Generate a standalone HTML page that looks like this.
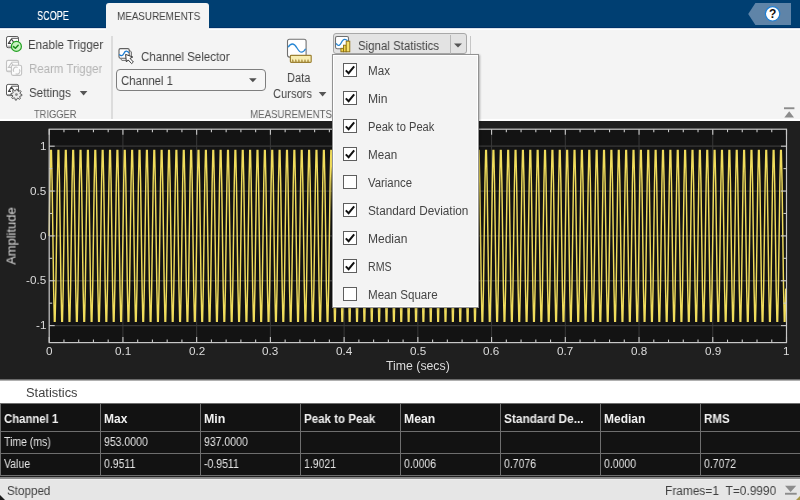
<!DOCTYPE html>
<html><head><meta charset="utf-8"><style>
html,body{margin:0;padding:0;width:800px;height:500px;overflow:hidden;background:#f4f4f4;}
.r{position:absolute;}
.t{position:absolute;white-space:pre;font-family:"Liberation Sans",sans-serif;will-change:transform;}
.lcd{will-change:auto;}
</style></head><body>
<div class="r" style="left:0px;top:0px;width:800px;height:27px;background:#003f72"></div>
<div class="r" style="left:0px;top:27px;width:800px;height:1px;background:#00336a"></div>
<div class="r" style="left:0px;top:28px;width:800px;height:1px;background:#dde3ea"></div>
<div class="r" style="left:0px;top:29px;width:800px;height:1px;background:#ffffff"></div>
<div class="r" style="left:0px;top:30px;width:800px;height:90px;background:#f4f4f4"></div>
<div class="r" style="left:106px;top:3px;width:103px;height:27px;background:#f4f4f4;border-radius:3px 3px 0 0"></div>
<div class="t" style="left:37.00px;top:10px;font-size:12px;line-height:12px;color:#ffffff;transform:scaleX(0.7557);transform-origin:0 0;text-shadow:0.35px 0 0 rgba(255,255,255,0.6);">SCOPE</div>
<div class="t" style="left:117.30px;top:10px;font-size:11.6px;line-height:11.6px;color:#404040;transform:scaleX(0.8503);transform-origin:0 0;">MEASUREMENTS</div>
<svg class="r" style="left:740px;top:0px" width="60" height="28" viewBox="740 0 60 28"><polygon points="748.2,14 755.4,3 791,3 791,25 755.4,25" fill="#5f84a8"/><circle cx="772.6" cy="13.8" r="7.2" fill="#ffffff" stroke="#1f7fd4" stroke-width="1.2"/><text x="772.6" y="18.2" text-anchor="middle" font-family="Liberation Sans" font-weight="bold" font-size="12" fill="#111">?</text></svg>
<div class="r" style="left:111px;top:36px;width:2px;height:83px;background:#dcdcdc"></div>
<div class="r" style="left:470px;top:36px;width:1px;height:19px;background:#c6c6c6"></div>
<div class="t" style="left:28.00px;top:39px;font-size:12.5px;line-height:12.5px;color:#444444;transform:scaleX(0.9225);transform-origin:0 0;">Enable Trigger</div>
<div class="t" style="left:28.50px;top:63px;font-size:12.5px;line-height:12.5px;color:#b4b4b4;transform:scaleX(0.9175);transform-origin:0 0;">Rearm Trigger</div>
<div class="t" style="left:29.40px;top:87px;font-size:12.5px;line-height:12.5px;color:#444444;transform:scaleX(0.9255);transform-origin:0 0;">Settings</div>
<svg class="r" style="left:78px;top:89px" width="12" height="8"><polygon points="1.8,2 9.4,2 5.6,6.5" fill="#555"/></svg>
<div class="t" style="left:34.20px;top:108px;font-size:11.6px;line-height:11.6px;color:#666666;transform:scaleX(0.8023);transform-origin:0 0;">TRIGGER</div>
<div class="t" style="left:141.00px;top:51px;font-size:12.5px;line-height:12.5px;color:#444444;transform:scaleX(0.9230);transform-origin:0 0;">Channel Selector</div>
<div class="r" style="left:115.5px;top:69.3px;width:150px;height:21.7px;box-sizing:border-box;border:1px solid #7e7e7e;border-radius:4px;background:#f6f6f6"></div>
<div class="t" style="left:120.65px;top:75px;font-size:12.5px;line-height:12.5px;color:#444444;transform:scaleX(0.9125);transform-origin:0 0;">Channel 1</div>
<svg class="r" style="left:246px;top:75px" width="14" height="10"><polygon points="3,3.2 10.7,3.2 6.85,7.3" fill="#505050"/></svg>
<div class="t" style="left:287.00px;top:72px;font-size:12.5px;line-height:12.5px;color:#444444;transform:scaleX(0.8859);transform-origin:0 0;">Data</div>
<div class="t" style="left:273.00px;top:88px;font-size:12.5px;line-height:12.5px;color:#444444;transform:scaleX(0.8912);transform-origin:0 0;">Cursors</div>
<svg class="r" style="left:316px;top:90px" width="12" height="8"><polygon points="2.8,2 10.4,2 6.6,6.5" fill="#555"/></svg>
<div class="t" style="left:250.00px;top:108px;font-size:11.6px;line-height:11.6px;color:#666666;transform:scaleX(0.8371);transform-origin:0 0;">MEASUREMENTS</div>
<div class="r" style="left:333px;top:33px;width:134px;height:21px;box-sizing:border-box;border:1px solid #a8a8a8;border-radius:3px;background:#e3e3e3"></div>
<div class="r" style="left:450px;top:35px;width:1px;height:19px;background:#b8b8b8"></div>
<div class="t" style="left:358.00px;top:40px;font-size:12.5px;line-height:12.5px;color:#444444;transform:scaleX(0.9180);transform-origin:0 0;">Signal Statistics</div>
<svg class="r" style="left:450px;top:40px" width="16" height="10"><polygon points="4,3.6 12,3.6 8,7.6" fill="#555"/></svg>
<svg class="r" style="left:0px;top:0px" width="800" height="120" viewBox="0 0 800 120"><rect x="6.5" y="36.5" width="12" height="11.2" rx="1.6" fill="#fff" stroke="#5c5c5c" stroke-width="1"/><line x1="11.5" y1="38.3" x2="18.3" y2="38.3" stroke="#555" stroke-width="1"/><polyline points="11,43.4 8.4,43.4 11.4,39 14.2,43" fill="none" stroke="#404040" stroke-width="1.2" stroke-linejoin="round"/><line x1="7" y1="46.2" x2="18" y2="46.2" stroke="#9a9a9a" stroke-width="1"/><circle cx="16.4" cy="46.4" r="5" fill="#c9f3c1" stroke="#22a022" stroke-width="1.2"/><polyline points="13.5,46.6 15.4,48.3 18.2,45.3" fill="none" stroke="#1b8a1b" stroke-width="1.5" stroke-linecap="round" stroke-linejoin="round"/><g stroke="#c2c2c2" fill="none"><rect x="6.5" y="60.4" width="12" height="11.4" rx="1.6" fill="#fbfbfb" stroke-width="1.1"/><line x1="11.5" y1="62.2" x2="18.3" y2="62.2" stroke-width="1"/><polyline points="11,67.4 8.4,67.4 11.4,63 13.6,66" stroke-width="1.1"/><line x1="7" y1="71" x2="11" y2="71" stroke-width="1"/><rect x="11.4" y="65.2" width="10.2" height="10.2" rx="1.6" fill="#fbfbfb" stroke-width="1.1"/><path d="M13.8 71.8 A3 3 0 0 1 17.6 67.4 M19.4 69.4 A3 3 0 0 1 15.6 73.8" stroke-width="1.1"/></g><rect x="6.5" y="84.4" width="12" height="11.2" rx="1.6" fill="#fff" stroke="#5c5c5c" stroke-width="1"/><line x1="11.4" y1="86.2" x2="18.3" y2="86.2" stroke="#555" stroke-width="1"/><polyline points="11,91.4 8.6,91.4 11.4,87 14,90.6" fill="none" stroke="#404040" stroke-width="1.2" stroke-linejoin="round"/><line x1="7" y1="94.6" x2="12" y2="94.6" stroke="#9a9a9a" stroke-width="1"/><polygon points="16.40,89.00 17.49,89.11 17.89,91.00 18.57,91.36 20.36,90.64 21.06,91.49 20.00,93.11 20.23,93.84 22.00,94.60 21.89,95.69 20.00,96.09 19.64,96.77 20.36,98.56 19.51,99.26 17.89,98.20 17.16,98.43 16.40,100.20 15.31,100.09 14.91,98.20 14.23,97.84 12.44,98.56 11.74,97.71 12.80,96.09 12.57,95.36 10.80,94.60 10.91,93.51 12.80,93.11 13.16,92.43 12.44,90.64 13.29,89.94 14.91,91.00 15.64,90.77" fill="#ececec" stroke="#4a4a4a" stroke-width="0.9" stroke-linejoin="round"/><circle cx="16.4" cy="94.6" r="1.4" fill="#8a8a8a"/><path d="M129 50 L131.4 51.8 L131.4 57.6 L129 59" fill="#e4e4e4" stroke="#707070" stroke-width="1"/><rect x="119" y="48.6" width="10.2" height="9.6" rx="1.4" fill="#fff" stroke="#606060" stroke-width="1.1"/><path d="M120.6 58.4 L121.8 60.4 L131 60.4" fill="none" stroke="#707070" stroke-width="1"/><path d="M119.3 54.3 C120.6 56.2 122.6 56.2 124 53.2 C125.2 50.6 127.4 50.6 128.8 53" fill="none" stroke="#1b7bd0" stroke-width="1.3"/><polygon points="125.6,54.4 126.4,62 128.2,59.9 131.6,63.6 133.4,62 130,58.4 132.8,57" fill="#fff" stroke="#3c3c3c" stroke-width="1" stroke-linejoin="round"/><rect x="287.5" y="39.2" width="18.6" height="17.9" rx="2" fill="#fff" stroke="#707070" stroke-width="1.1"/><path d="M288.2 47.2 C289.6 44.6 291 44 292.4 44 C294.6 44 296 46.4 297 48 C298.2 50 299.6 52.2 301.5 52.2 C303.2 52.2 304.6 50.6 305.6 48.8" fill="none" stroke="#2686d4" stroke-width="1.3"/><rect x="290.4" y="55.3" width="20.8" height="7" rx="0.8" fill="#f8eeb2" stroke="#9d8235" stroke-width="1.2"/><polygon points="291.70,61.8 293.90,61.8 292.80,58.8" fill="#a88a3a"/><polygon points="294.75,61.8 296.95,61.8 295.85,58.8" fill="#a88a3a"/><polygon points="297.80,61.8 300.00,61.8 298.90,58.8" fill="#a88a3a"/><polygon points="300.85,61.8 303.05,61.8 301.95,58.8" fill="#a88a3a"/><polygon points="303.90,61.8 306.10,61.8 305.00,58.8" fill="#a88a3a"/><polygon points="306.95,61.8 309.15,61.8 308.05,58.8" fill="#a88a3a"/><rect x="335.5" y="36.5" width="13" height="12.2" rx="1.6" fill="#fff" stroke="#707070" stroke-width="1.1"/><path d="M336.2 43.4 C337.2 45.4 338.6 45.8 339.6 45 C341 44 341.6 41.6 342.8 40.4 C344 39 345.6 39 347.6 40.8" fill="none" stroke="#2686d4" stroke-width="1.3"/><rect x="340.9" y="48.3" width="2.6" height="3.5" fill="#f1d54a" stroke="#8c6e12" stroke-width="0.9"/><rect x="343.5" y="45.2" width="2.7" height="6.6" fill="#f1d54a" stroke="#8c6e12" stroke-width="0.9"/><rect x="346.2" y="41.2" width="3.6" height="10.6" fill="#f6e06a" stroke="#8c6e12" stroke-width="0.9"/></svg>
<svg class="r" style="left:780px;top:104px" width="20" height="16"><rect x="4" y="3.3" width="10.4" height="1.9" fill="#8c8c8c"/><polygon points="4.3,13.5 14,13.5 9.2,7.3" fill="#8c8c8c"/></svg>
<div class="r" style="left:0px;top:119px;width:800px;height:2px;background:#ffffff"></div>
<div class="r" style="left:0px;top:121px;width:800px;height:258px;background:#1f1f1f"></div>
<svg class="r" style="left:0px;top:0px" width="800" height="500" viewBox="0 0 800 500"><rect x="49.2" y="129.2" width="737.30" height="213.40" fill="#131313"/><line x1="122.93" y1="129.2" x2="122.93" y2="342.6" stroke="#3a3a3a" stroke-width="1"/><line x1="196.66" y1="129.2" x2="196.66" y2="342.6" stroke="#3a3a3a" stroke-width="1"/><line x1="270.39" y1="129.2" x2="270.39" y2="342.6" stroke="#3a3a3a" stroke-width="1"/><line x1="344.12" y1="129.2" x2="344.12" y2="342.6" stroke="#3a3a3a" stroke-width="1"/><line x1="417.85" y1="129.2" x2="417.85" y2="342.6" stroke="#3a3a3a" stroke-width="1"/><line x1="491.58" y1="129.2" x2="491.58" y2="342.6" stroke="#3a3a3a" stroke-width="1"/><line x1="565.31" y1="129.2" x2="565.31" y2="342.6" stroke="#3a3a3a" stroke-width="1"/><line x1="639.04" y1="129.2" x2="639.04" y2="342.6" stroke="#3a3a3a" stroke-width="1"/><line x1="712.77" y1="129.2" x2="712.77" y2="342.6" stroke="#3a3a3a" stroke-width="1"/><line x1="49.2" y1="325.60" x2="786.5" y2="325.60" stroke="#3a3a3a" stroke-width="1.3"/><line x1="49.2" y1="280.75" x2="786.5" y2="280.75" stroke="#3a3a3a" stroke-width="1.3"/><line x1="49.2" y1="235.90" x2="786.5" y2="235.90" stroke="#3a3a3a" stroke-width="1.3"/><line x1="49.2" y1="191.05" x2="786.5" y2="191.05" stroke="#3a3a3a" stroke-width="1.3"/><line x1="49.2" y1="146.20" x2="786.5" y2="146.20" stroke="#3a3a3a" stroke-width="1.3"/><polyline points="49.20,235.90 49.94,183.18 50.67,150.59 51.41,150.59 52.15,183.18 52.89,235.90 53.62,288.62 54.36,321.21 55.10,321.21 55.84,288.62 56.57,235.90 57.31,183.18 58.05,150.59 58.78,150.59 59.52,183.18 60.26,235.90 61.00,288.62 61.73,321.21 62.47,321.21 63.21,288.62 63.95,235.90 64.68,183.18 65.42,150.59 66.16,150.59 66.90,183.18 67.63,235.90 68.37,288.62 69.11,321.21 69.84,321.21 70.58,288.62 71.32,235.90 72.06,183.18 72.79,150.59 73.53,150.59 74.27,183.18 75.01,235.90 75.74,288.62 76.48,321.21 77.22,321.21 77.95,288.62 78.69,235.90 79.43,183.18 80.17,150.59 80.90,150.59 81.64,183.18 82.38,235.90 83.12,288.62 83.85,321.21 84.59,321.21 85.33,288.62 86.06,235.90 86.80,183.18 87.54,150.59 88.28,150.59 89.01,183.18 89.75,235.90 90.49,288.62 91.23,321.21 91.96,321.21 92.70,288.62 93.44,235.90 94.18,183.18 94.91,150.59 95.65,150.59 96.39,183.18 97.12,235.90 97.86,288.62 98.60,321.21 99.34,321.21 100.07,288.62 100.81,235.90 101.55,183.18 102.29,150.59 103.02,150.59 103.76,183.18 104.50,235.90 105.23,288.62 105.97,321.21 106.71,321.21 107.45,288.62 108.18,235.90 108.92,183.18 109.66,150.59 110.40,150.59 111.13,183.18 111.87,235.90 112.61,288.62 113.35,321.21 114.08,321.21 114.82,288.62 115.56,235.90 116.29,183.18 117.03,150.59 117.77,150.59 118.51,183.18 119.24,235.90 119.98,288.62 120.72,321.21 121.46,321.21 122.19,288.62 122.93,235.90 123.67,183.18 124.40,150.59 125.14,150.59 125.88,183.18 126.62,235.90 127.35,288.62 128.09,321.21 128.83,321.21 129.57,288.62 130.30,235.90 131.04,183.18 131.78,150.59 132.51,150.59 133.25,183.18 133.99,235.90 134.73,288.62 135.46,321.21 136.20,321.21 136.94,288.62 137.68,235.90 138.41,183.18 139.15,150.59 139.89,150.59 140.63,183.18 141.36,235.90 142.10,288.62 142.84,321.21 143.57,321.21 144.31,288.62 145.05,235.90 145.79,183.18 146.52,150.59 147.26,150.59 148.00,183.18 148.74,235.90 149.47,288.62 150.21,321.21 150.95,321.21 151.68,288.62 152.42,235.90 153.16,183.18 153.90,150.59 154.63,150.59 155.37,183.18 156.11,235.90 156.85,288.62 157.58,321.21 158.32,321.21 159.06,288.62 159.79,235.90 160.53,183.18 161.27,150.59 162.01,150.59 162.74,183.18 163.48,235.90 164.22,288.62 164.96,321.21 165.69,321.21 166.43,288.62 167.17,235.90 167.91,183.18 168.64,150.59 169.38,150.59 170.12,183.18 170.85,235.90 171.59,288.62 172.33,321.21 173.07,321.21 173.80,288.62 174.54,235.90 175.28,183.18 176.02,150.59 176.75,150.59 177.49,183.18 178.23,235.90 178.96,288.62 179.70,321.21 180.44,321.21 181.18,288.62 181.91,235.90 182.65,183.18 183.39,150.59 184.13,150.59 184.86,183.18 185.60,235.90 186.34,288.62 187.08,321.21 187.81,321.21 188.55,288.62 189.29,235.90 190.02,183.18 190.76,150.59 191.50,150.59 192.24,183.18 192.97,235.90 193.71,288.62 194.45,321.21 195.19,321.21 195.92,288.62 196.66,235.90 197.40,183.18 198.13,150.59 198.87,150.59 199.61,183.18 200.35,235.90 201.08,288.62 201.82,321.21 202.56,321.21 203.30,288.62 204.03,235.90 204.77,183.18 205.51,150.59 206.24,150.59 206.98,183.18 207.72,235.90 208.46,288.62 209.19,321.21 209.93,321.21 210.67,288.62 211.41,235.90 212.14,183.18 212.88,150.59 213.62,150.59 214.36,183.18 215.09,235.90 215.83,288.62 216.57,321.21 217.30,321.21 218.04,288.62 218.78,235.90 219.52,183.18 220.25,150.59 220.99,150.59 221.73,183.18 222.47,235.90 223.20,288.62 223.94,321.21 224.68,321.21 225.41,288.62 226.15,235.90 226.89,183.18 227.63,150.59 228.36,150.59 229.10,183.18 229.84,235.90 230.58,288.62 231.31,321.21 232.05,321.21 232.79,288.62 233.52,235.90 234.26,183.18 235.00,150.59 235.74,150.59 236.47,183.18 237.21,235.90 237.95,288.62 238.69,321.21 239.42,321.21 240.16,288.62 240.90,235.90 241.64,183.18 242.37,150.59 243.11,150.59 243.85,183.18 244.58,235.90 245.32,288.62 246.06,321.21 246.80,321.21 247.53,288.62 248.27,235.90 249.01,183.18 249.75,150.59 250.48,150.59 251.22,183.18 251.96,235.90 252.69,288.62 253.43,321.21 254.17,321.21 254.91,288.62 255.64,235.90 256.38,183.18 257.12,150.59 257.86,150.59 258.59,183.18 259.33,235.90 260.07,288.62 260.81,321.21 261.54,321.21 262.28,288.62 263.02,235.90 263.75,183.18 264.49,150.59 265.23,150.59 265.97,183.18 266.70,235.90 267.44,288.62 268.18,321.21 268.92,321.21 269.65,288.62 270.39,235.90 271.13,183.18 271.86,150.59 272.60,150.59 273.34,183.18 274.08,235.90 274.81,288.62 275.55,321.21 276.29,321.21 277.03,288.62 277.76,235.90 278.50,183.18 279.24,150.59 279.97,150.59 280.71,183.18 281.45,235.90 282.19,288.62 282.92,321.21 283.66,321.21 284.40,288.62 285.14,235.90 285.87,183.18 286.61,150.59 287.35,150.59 288.09,183.18 288.82,235.90 289.56,288.62 290.30,321.21 291.03,321.21 291.77,288.62 292.51,235.90 293.25,183.18 293.98,150.59 294.72,150.59 295.46,183.18 296.20,235.90 296.93,288.62 297.67,321.21 298.41,321.21 299.14,288.62 299.88,235.90 300.62,183.18 301.36,150.59 302.09,150.59 302.83,183.18 303.57,235.90 304.31,288.62 305.04,321.21 305.78,321.21 306.52,288.62 307.25,235.90 307.99,183.18 308.73,150.59 309.47,150.59 310.20,183.18 310.94,235.90 311.68,288.62 312.42,321.21 313.15,321.21 313.89,288.62 314.63,235.90 315.37,183.18 316.10,150.59 316.84,150.59 317.58,183.18 318.31,235.90 319.05,288.62 319.79,321.21 320.53,321.21 321.26,288.62 322.00,235.90 322.74,183.18 323.48,150.59 324.21,150.59 324.95,183.18 325.69,235.90 326.42,288.62 327.16,321.21 327.90,321.21 328.64,288.62 329.37,235.90 330.11,183.18 330.85,150.59 331.59,150.59 332.32,183.18 333.06,235.90 333.80,288.62 334.54,321.21 335.27,321.21 336.01,288.62 336.75,235.90 337.48,183.18 338.22,150.59 338.96,150.59 339.70,183.18 340.43,235.90 341.17,288.62 341.91,321.21 342.65,321.21 343.38,288.62 344.12,235.90 344.86,183.18 345.59,150.59 346.33,150.59 347.07,183.18 347.81,235.90 348.54,288.62 349.28,321.21 350.02,321.21 350.76,288.62 351.49,235.90 352.23,183.18 352.97,150.59 353.70,150.59 354.44,183.18 355.18,235.90 355.92,288.62 356.65,321.21 357.39,321.21 358.13,288.62 358.87,235.90 359.60,183.18 360.34,150.59 361.08,150.59 361.82,183.18 362.55,235.90 363.29,288.62 364.03,321.21 364.76,321.21 365.50,288.62 366.24,235.90 366.98,183.18 367.71,150.59 368.45,150.59 369.19,183.18 369.93,235.90 370.66,288.62 371.40,321.21 372.14,321.21 372.87,288.62 373.61,235.90 374.35,183.18 375.09,150.59 375.82,150.59 376.56,183.18 377.30,235.90 378.04,288.62 378.77,321.21 379.51,321.21 380.25,288.62 380.98,235.90 381.72,183.18 382.46,150.59 383.20,150.59 383.93,183.18 384.67,235.90 385.41,288.62 386.15,321.21 386.88,321.21 387.62,288.62 388.36,235.90 389.10,183.18 389.83,150.59 390.57,150.59 391.31,183.18 392.04,235.90 392.78,288.62 393.52,321.21 394.26,321.21 394.99,288.62 395.73,235.90 396.47,183.18 397.21,150.59 397.94,150.59 398.68,183.18 399.42,235.90 400.15,288.62 400.89,321.21 401.63,321.21 402.37,288.62 403.10,235.90 403.84,183.18 404.58,150.59 405.32,150.59 406.05,183.18 406.79,235.90 407.53,288.62 408.27,321.21 409.00,321.21 409.74,288.62 410.48,235.90 411.21,183.18 411.95,150.59 412.69,150.59 413.43,183.18 414.16,235.90 414.90,288.62 415.64,321.21 416.38,321.21 417.11,288.62 417.85,235.90 418.59,183.18 419.32,150.59 420.06,150.59 420.80,183.18 421.54,235.90 422.27,288.62 423.01,321.21 423.75,321.21 424.49,288.62 425.22,235.90 425.96,183.18 426.70,150.59 427.43,150.59 428.17,183.18 428.91,235.90 429.65,288.62 430.38,321.21 431.12,321.21 431.86,288.62 432.60,235.90 433.33,183.18 434.07,150.59 434.81,150.59 435.55,183.18 436.28,235.90 437.02,288.62 437.76,321.21 438.49,321.21 439.23,288.62 439.97,235.90 440.71,183.18 441.44,150.59 442.18,150.59 442.92,183.18 443.66,235.90 444.39,288.62 445.13,321.21 445.87,321.21 446.60,288.62 447.34,235.90 448.08,183.18 448.82,150.59 449.55,150.59 450.29,183.18 451.03,235.90 451.77,288.62 452.50,321.21 453.24,321.21 453.98,288.62 454.71,235.90 455.45,183.18 456.19,150.59 456.93,150.59 457.66,183.18 458.40,235.90 459.14,288.62 459.88,321.21 460.61,321.21 461.35,288.62 462.09,235.90 462.83,183.18 463.56,150.59 464.30,150.59 465.04,183.18 465.77,235.90 466.51,288.62 467.25,321.21 467.99,321.21 468.72,288.62 469.46,235.90 470.20,183.18 470.94,150.59 471.67,150.59 472.41,183.18 473.15,235.90 473.88,288.62 474.62,321.21 475.36,321.21 476.10,288.62 476.83,235.90 477.57,183.18 478.31,150.59 479.05,150.59 479.78,183.18 480.52,235.90 481.26,288.62 482.00,321.21 482.73,321.21 483.47,288.62 484.21,235.90 484.94,183.18 485.68,150.59 486.42,150.59 487.16,183.18 487.89,235.90 488.63,288.62 489.37,321.21 490.11,321.21 490.84,288.62 491.58,235.90 492.32,183.18 493.05,150.59 493.79,150.59 494.53,183.18 495.27,235.90 496.00,288.62 496.74,321.21 497.48,321.21 498.22,288.62 498.95,235.90 499.69,183.18 500.43,150.59 501.16,150.59 501.90,183.18 502.64,235.90 503.38,288.62 504.11,321.21 504.85,321.21 505.59,288.62 506.33,235.90 507.06,183.18 507.80,150.59 508.54,150.59 509.28,183.18 510.01,235.90 510.75,288.62 511.49,321.21 512.22,321.21 512.96,288.62 513.70,235.90 514.44,183.18 515.17,150.59 515.91,150.59 516.65,183.18 517.39,235.90 518.12,288.62 518.86,321.21 519.60,321.21 520.33,288.62 521.07,235.90 521.81,183.18 522.55,150.59 523.28,150.59 524.02,183.18 524.76,235.90 525.50,288.62 526.23,321.21 526.97,321.21 527.71,288.62 528.45,235.90 529.18,183.18 529.92,150.59 530.66,150.59 531.39,183.18 532.13,235.90 532.87,288.62 533.61,321.21 534.34,321.21 535.08,288.62 535.82,235.90 536.56,183.18 537.29,150.59 538.03,150.59 538.77,183.18 539.50,235.90 540.24,288.62 540.98,321.21 541.72,321.21 542.45,288.62 543.19,235.90 543.93,183.18 544.67,150.59 545.40,150.59 546.14,183.18 546.88,235.90 547.61,288.62 548.35,321.21 549.09,321.21 549.83,288.62 550.56,235.90 551.30,183.18 552.04,150.59 552.78,150.59 553.51,183.18 554.25,235.90 554.99,288.62 555.73,321.21 556.46,321.21 557.20,288.62 557.94,235.90 558.67,183.18 559.41,150.59 560.15,150.59 560.89,183.18 561.62,235.90 562.36,288.62 563.10,321.21 563.84,321.21 564.57,288.62 565.31,235.90 566.05,183.18 566.78,150.59 567.52,150.59 568.26,183.18 569.00,235.90 569.73,288.62 570.47,321.21 571.21,321.21 571.95,288.62 572.68,235.90 573.42,183.18 574.16,150.59 574.89,150.59 575.63,183.18 576.37,235.90 577.11,288.62 577.84,321.21 578.58,321.21 579.32,288.62 580.06,235.90 580.79,183.18 581.53,150.59 582.27,150.59 583.01,183.18 583.74,235.90 584.48,288.62 585.22,321.21 585.95,321.21 586.69,288.62 587.43,235.90 588.17,183.18 588.90,150.59 589.64,150.59 590.38,183.18 591.12,235.90 591.85,288.62 592.59,321.21 593.33,321.21 594.06,288.62 594.80,235.90 595.54,183.18 596.28,150.59 597.01,150.59 597.75,183.18 598.49,235.90 599.23,288.62 599.96,321.21 600.70,321.21 601.44,288.62 602.17,235.90 602.91,183.18 603.65,150.59 604.39,150.59 605.12,183.18 605.86,235.90 606.60,288.62 607.34,321.21 608.07,321.21 608.81,288.62 609.55,235.90 610.29,183.18 611.02,150.59 611.76,150.59 612.50,183.18 613.23,235.90 613.97,288.62 614.71,321.21 615.45,321.21 616.18,288.62 616.92,235.90 617.66,183.18 618.40,150.59 619.13,150.59 619.87,183.18 620.61,235.90 621.34,288.62 622.08,321.21 622.82,321.21 623.56,288.62 624.29,235.90 625.03,183.18 625.77,150.59 626.51,150.59 627.24,183.18 627.98,235.90 628.72,288.62 629.46,321.21 630.19,321.21 630.93,288.62 631.67,235.90 632.40,183.18 633.14,150.59 633.88,150.59 634.62,183.18 635.35,235.90 636.09,288.62 636.83,321.21 637.57,321.21 638.30,288.62 639.04,235.90 639.78,183.18 640.51,150.59 641.25,150.59 641.99,183.18 642.73,235.90 643.46,288.62 644.20,321.21 644.94,321.21 645.68,288.62 646.41,235.90 647.15,183.18 647.89,150.59 648.62,150.59 649.36,183.18 650.10,235.90 650.84,288.62 651.57,321.21 652.31,321.21 653.05,288.62 653.79,235.90 654.52,183.18 655.26,150.59 656.00,150.59 656.74,183.18 657.47,235.90 658.21,288.62 658.95,321.21 659.68,321.21 660.42,288.62 661.16,235.90 661.90,183.18 662.63,150.59 663.37,150.59 664.11,183.18 664.85,235.90 665.58,288.62 666.32,321.21 667.06,321.21 667.79,288.62 668.53,235.90 669.27,183.18 670.01,150.59 670.74,150.59 671.48,183.18 672.22,235.90 672.96,288.62 673.69,321.21 674.43,321.21 675.17,288.62 675.90,235.90 676.64,183.18 677.38,150.59 678.12,150.59 678.85,183.18 679.59,235.90 680.33,288.62 681.07,321.21 681.80,321.21 682.54,288.62 683.28,235.90 684.02,183.18 684.75,150.59 685.49,150.59 686.23,183.18 686.96,235.90 687.70,288.62 688.44,321.21 689.18,321.21 689.91,288.62 690.65,235.90 691.39,183.18 692.13,150.59 692.86,150.59 693.60,183.18 694.34,235.90 695.07,288.62 695.81,321.21 696.55,321.21 697.29,288.62 698.02,235.90 698.76,183.18 699.50,150.59 700.24,150.59 700.97,183.18 701.71,235.90 702.45,288.62 703.19,321.21 703.92,321.21 704.66,288.62 705.40,235.90 706.13,183.18 706.87,150.59 707.61,150.59 708.35,183.18 709.08,235.90 709.82,288.62 710.56,321.21 711.30,321.21 712.03,288.62 712.77,235.90 713.51,183.18 714.24,150.59 714.98,150.59 715.72,183.18 716.46,235.90 717.19,288.62 717.93,321.21 718.67,321.21 719.41,288.62 720.14,235.90 720.88,183.18 721.62,150.59 722.35,150.59 723.09,183.18 723.83,235.90 724.57,288.62 725.30,321.21 726.04,321.21 726.78,288.62 727.52,235.90 728.25,183.18 728.99,150.59 729.73,150.59 730.47,183.18 731.20,235.90 731.94,288.62 732.68,321.21 733.41,321.21 734.15,288.62 734.89,235.90 735.63,183.18 736.36,150.59 737.10,150.59 737.84,183.18 738.58,235.90 739.31,288.62 740.05,321.21 740.79,321.21 741.52,288.62 742.26,235.90 743.00,183.18 743.74,150.59 744.47,150.59 745.21,183.18 745.95,235.90 746.69,288.62 747.42,321.21 748.16,321.21 748.90,288.62 749.63,235.90 750.37,183.18 751.11,150.59 751.85,150.59 752.58,183.18 753.32,235.90 754.06,288.62 754.80,321.21 755.53,321.21 756.27,288.62 757.01,235.90 757.75,183.18 758.48,150.59 759.22,150.59 759.96,183.18 760.69,235.90 761.43,288.62 762.17,321.21 762.91,321.21 763.64,288.62 764.38,235.90 765.12,183.18 765.86,150.59 766.59,150.59 767.33,183.18 768.07,235.90 768.80,288.62 769.54,321.21 770.28,321.21 771.02,288.62 771.75,235.90 772.49,183.18 773.23,150.59 773.97,150.59 774.70,183.18 775.44,235.90 776.18,288.62 776.92,321.21 777.65,321.21 778.39,288.62 779.13,235.90 779.86,183.18 780.60,150.59 781.34,150.59 782.08,183.18 782.81,235.90 783.55,288.62 784.29,321.21 785.03,321.21 785.76,288.62" fill="none" stroke="#f0dc5c" stroke-width="1.45" stroke-linejoin="miter" stroke-miterlimit="2"/><rect x="49.2" y="129.2" width="737.30" height="213.40" fill="none" stroke="#c8c8c8" stroke-width="1.2"/><line x1="49.20" y1="342.6" x2="49.20" y2="337.1" stroke="#c8c8c8" stroke-width="1.1"/><line x1="49.20" y1="129.2" x2="49.20" y2="134.7" stroke="#c8c8c8" stroke-width="1.1"/><line x1="63.95" y1="342.6" x2="63.95" y2="339.6" stroke="#c8c8c8" stroke-width="1.1"/><line x1="63.95" y1="129.2" x2="63.95" y2="132.2" stroke="#c8c8c8" stroke-width="1.1"/><line x1="78.69" y1="342.6" x2="78.69" y2="339.6" stroke="#c8c8c8" stroke-width="1.1"/><line x1="78.69" y1="129.2" x2="78.69" y2="132.2" stroke="#c8c8c8" stroke-width="1.1"/><line x1="93.44" y1="342.6" x2="93.44" y2="339.6" stroke="#c8c8c8" stroke-width="1.1"/><line x1="93.44" y1="129.2" x2="93.44" y2="132.2" stroke="#c8c8c8" stroke-width="1.1"/><line x1="108.18" y1="342.6" x2="108.18" y2="339.6" stroke="#c8c8c8" stroke-width="1.1"/><line x1="108.18" y1="129.2" x2="108.18" y2="132.2" stroke="#c8c8c8" stroke-width="1.1"/><line x1="122.93" y1="342.6" x2="122.93" y2="337.1" stroke="#c8c8c8" stroke-width="1.1"/><line x1="122.93" y1="129.2" x2="122.93" y2="134.7" stroke="#c8c8c8" stroke-width="1.1"/><line x1="137.68" y1="342.6" x2="137.68" y2="339.6" stroke="#c8c8c8" stroke-width="1.1"/><line x1="137.68" y1="129.2" x2="137.68" y2="132.2" stroke="#c8c8c8" stroke-width="1.1"/><line x1="152.42" y1="342.6" x2="152.42" y2="339.6" stroke="#c8c8c8" stroke-width="1.1"/><line x1="152.42" y1="129.2" x2="152.42" y2="132.2" stroke="#c8c8c8" stroke-width="1.1"/><line x1="167.17" y1="342.6" x2="167.17" y2="339.6" stroke="#c8c8c8" stroke-width="1.1"/><line x1="167.17" y1="129.2" x2="167.17" y2="132.2" stroke="#c8c8c8" stroke-width="1.1"/><line x1="181.91" y1="342.6" x2="181.91" y2="339.6" stroke="#c8c8c8" stroke-width="1.1"/><line x1="181.91" y1="129.2" x2="181.91" y2="132.2" stroke="#c8c8c8" stroke-width="1.1"/><line x1="196.66" y1="342.6" x2="196.66" y2="337.1" stroke="#c8c8c8" stroke-width="1.1"/><line x1="196.66" y1="129.2" x2="196.66" y2="134.7" stroke="#c8c8c8" stroke-width="1.1"/><line x1="211.41" y1="342.6" x2="211.41" y2="339.6" stroke="#c8c8c8" stroke-width="1.1"/><line x1="211.41" y1="129.2" x2="211.41" y2="132.2" stroke="#c8c8c8" stroke-width="1.1"/><line x1="226.15" y1="342.6" x2="226.15" y2="339.6" stroke="#c8c8c8" stroke-width="1.1"/><line x1="226.15" y1="129.2" x2="226.15" y2="132.2" stroke="#c8c8c8" stroke-width="1.1"/><line x1="240.90" y1="342.6" x2="240.90" y2="339.6" stroke="#c8c8c8" stroke-width="1.1"/><line x1="240.90" y1="129.2" x2="240.90" y2="132.2" stroke="#c8c8c8" stroke-width="1.1"/><line x1="255.64" y1="342.6" x2="255.64" y2="339.6" stroke="#c8c8c8" stroke-width="1.1"/><line x1="255.64" y1="129.2" x2="255.64" y2="132.2" stroke="#c8c8c8" stroke-width="1.1"/><line x1="270.39" y1="342.6" x2="270.39" y2="337.1" stroke="#c8c8c8" stroke-width="1.1"/><line x1="270.39" y1="129.2" x2="270.39" y2="134.7" stroke="#c8c8c8" stroke-width="1.1"/><line x1="285.14" y1="342.6" x2="285.14" y2="339.6" stroke="#c8c8c8" stroke-width="1.1"/><line x1="285.14" y1="129.2" x2="285.14" y2="132.2" stroke="#c8c8c8" stroke-width="1.1"/><line x1="299.88" y1="342.6" x2="299.88" y2="339.6" stroke="#c8c8c8" stroke-width="1.1"/><line x1="299.88" y1="129.2" x2="299.88" y2="132.2" stroke="#c8c8c8" stroke-width="1.1"/><line x1="314.63" y1="342.6" x2="314.63" y2="339.6" stroke="#c8c8c8" stroke-width="1.1"/><line x1="314.63" y1="129.2" x2="314.63" y2="132.2" stroke="#c8c8c8" stroke-width="1.1"/><line x1="329.37" y1="342.6" x2="329.37" y2="339.6" stroke="#c8c8c8" stroke-width="1.1"/><line x1="329.37" y1="129.2" x2="329.37" y2="132.2" stroke="#c8c8c8" stroke-width="1.1"/><line x1="344.12" y1="342.6" x2="344.12" y2="337.1" stroke="#c8c8c8" stroke-width="1.1"/><line x1="344.12" y1="129.2" x2="344.12" y2="134.7" stroke="#c8c8c8" stroke-width="1.1"/><line x1="358.87" y1="342.6" x2="358.87" y2="339.6" stroke="#c8c8c8" stroke-width="1.1"/><line x1="358.87" y1="129.2" x2="358.87" y2="132.2" stroke="#c8c8c8" stroke-width="1.1"/><line x1="373.61" y1="342.6" x2="373.61" y2="339.6" stroke="#c8c8c8" stroke-width="1.1"/><line x1="373.61" y1="129.2" x2="373.61" y2="132.2" stroke="#c8c8c8" stroke-width="1.1"/><line x1="388.36" y1="342.6" x2="388.36" y2="339.6" stroke="#c8c8c8" stroke-width="1.1"/><line x1="388.36" y1="129.2" x2="388.36" y2="132.2" stroke="#c8c8c8" stroke-width="1.1"/><line x1="403.10" y1="342.6" x2="403.10" y2="339.6" stroke="#c8c8c8" stroke-width="1.1"/><line x1="403.10" y1="129.2" x2="403.10" y2="132.2" stroke="#c8c8c8" stroke-width="1.1"/><line x1="417.85" y1="342.6" x2="417.85" y2="337.1" stroke="#c8c8c8" stroke-width="1.1"/><line x1="417.85" y1="129.2" x2="417.85" y2="134.7" stroke="#c8c8c8" stroke-width="1.1"/><line x1="432.60" y1="342.6" x2="432.60" y2="339.6" stroke="#c8c8c8" stroke-width="1.1"/><line x1="432.60" y1="129.2" x2="432.60" y2="132.2" stroke="#c8c8c8" stroke-width="1.1"/><line x1="447.34" y1="342.6" x2="447.34" y2="339.6" stroke="#c8c8c8" stroke-width="1.1"/><line x1="447.34" y1="129.2" x2="447.34" y2="132.2" stroke="#c8c8c8" stroke-width="1.1"/><line x1="462.09" y1="342.6" x2="462.09" y2="339.6" stroke="#c8c8c8" stroke-width="1.1"/><line x1="462.09" y1="129.2" x2="462.09" y2="132.2" stroke="#c8c8c8" stroke-width="1.1"/><line x1="476.83" y1="342.6" x2="476.83" y2="339.6" stroke="#c8c8c8" stroke-width="1.1"/><line x1="476.83" y1="129.2" x2="476.83" y2="132.2" stroke="#c8c8c8" stroke-width="1.1"/><line x1="491.58" y1="342.6" x2="491.58" y2="337.1" stroke="#c8c8c8" stroke-width="1.1"/><line x1="491.58" y1="129.2" x2="491.58" y2="134.7" stroke="#c8c8c8" stroke-width="1.1"/><line x1="506.33" y1="342.6" x2="506.33" y2="339.6" stroke="#c8c8c8" stroke-width="1.1"/><line x1="506.33" y1="129.2" x2="506.33" y2="132.2" stroke="#c8c8c8" stroke-width="1.1"/><line x1="521.07" y1="342.6" x2="521.07" y2="339.6" stroke="#c8c8c8" stroke-width="1.1"/><line x1="521.07" y1="129.2" x2="521.07" y2="132.2" stroke="#c8c8c8" stroke-width="1.1"/><line x1="535.82" y1="342.6" x2="535.82" y2="339.6" stroke="#c8c8c8" stroke-width="1.1"/><line x1="535.82" y1="129.2" x2="535.82" y2="132.2" stroke="#c8c8c8" stroke-width="1.1"/><line x1="550.56" y1="342.6" x2="550.56" y2="339.6" stroke="#c8c8c8" stroke-width="1.1"/><line x1="550.56" y1="129.2" x2="550.56" y2="132.2" stroke="#c8c8c8" stroke-width="1.1"/><line x1="565.31" y1="342.6" x2="565.31" y2="337.1" stroke="#c8c8c8" stroke-width="1.1"/><line x1="565.31" y1="129.2" x2="565.31" y2="134.7" stroke="#c8c8c8" stroke-width="1.1"/><line x1="580.06" y1="342.6" x2="580.06" y2="339.6" stroke="#c8c8c8" stroke-width="1.1"/><line x1="580.06" y1="129.2" x2="580.06" y2="132.2" stroke="#c8c8c8" stroke-width="1.1"/><line x1="594.80" y1="342.6" x2="594.80" y2="339.6" stroke="#c8c8c8" stroke-width="1.1"/><line x1="594.80" y1="129.2" x2="594.80" y2="132.2" stroke="#c8c8c8" stroke-width="1.1"/><line x1="609.55" y1="342.6" x2="609.55" y2="339.6" stroke="#c8c8c8" stroke-width="1.1"/><line x1="609.55" y1="129.2" x2="609.55" y2="132.2" stroke="#c8c8c8" stroke-width="1.1"/><line x1="624.29" y1="342.6" x2="624.29" y2="339.6" stroke="#c8c8c8" stroke-width="1.1"/><line x1="624.29" y1="129.2" x2="624.29" y2="132.2" stroke="#c8c8c8" stroke-width="1.1"/><line x1="639.04" y1="342.6" x2="639.04" y2="337.1" stroke="#c8c8c8" stroke-width="1.1"/><line x1="639.04" y1="129.2" x2="639.04" y2="134.7" stroke="#c8c8c8" stroke-width="1.1"/><line x1="653.79" y1="342.6" x2="653.79" y2="339.6" stroke="#c8c8c8" stroke-width="1.1"/><line x1="653.79" y1="129.2" x2="653.79" y2="132.2" stroke="#c8c8c8" stroke-width="1.1"/><line x1="668.53" y1="342.6" x2="668.53" y2="339.6" stroke="#c8c8c8" stroke-width="1.1"/><line x1="668.53" y1="129.2" x2="668.53" y2="132.2" stroke="#c8c8c8" stroke-width="1.1"/><line x1="683.28" y1="342.6" x2="683.28" y2="339.6" stroke="#c8c8c8" stroke-width="1.1"/><line x1="683.28" y1="129.2" x2="683.28" y2="132.2" stroke="#c8c8c8" stroke-width="1.1"/><line x1="698.02" y1="342.6" x2="698.02" y2="339.6" stroke="#c8c8c8" stroke-width="1.1"/><line x1="698.02" y1="129.2" x2="698.02" y2="132.2" stroke="#c8c8c8" stroke-width="1.1"/><line x1="712.77" y1="342.6" x2="712.77" y2="337.1" stroke="#c8c8c8" stroke-width="1.1"/><line x1="712.77" y1="129.2" x2="712.77" y2="134.7" stroke="#c8c8c8" stroke-width="1.1"/><line x1="727.52" y1="342.6" x2="727.52" y2="339.6" stroke="#c8c8c8" stroke-width="1.1"/><line x1="727.52" y1="129.2" x2="727.52" y2="132.2" stroke="#c8c8c8" stroke-width="1.1"/><line x1="742.26" y1="342.6" x2="742.26" y2="339.6" stroke="#c8c8c8" stroke-width="1.1"/><line x1="742.26" y1="129.2" x2="742.26" y2="132.2" stroke="#c8c8c8" stroke-width="1.1"/><line x1="757.01" y1="342.6" x2="757.01" y2="339.6" stroke="#c8c8c8" stroke-width="1.1"/><line x1="757.01" y1="129.2" x2="757.01" y2="132.2" stroke="#c8c8c8" stroke-width="1.1"/><line x1="771.75" y1="342.6" x2="771.75" y2="339.6" stroke="#c8c8c8" stroke-width="1.1"/><line x1="771.75" y1="129.2" x2="771.75" y2="132.2" stroke="#c8c8c8" stroke-width="1.1"/><line x1="786.50" y1="342.6" x2="786.50" y2="337.1" stroke="#c8c8c8" stroke-width="1.1"/><line x1="786.50" y1="129.2" x2="786.50" y2="134.7" stroke="#c8c8c8" stroke-width="1.1"/><line x1="49.2" y1="325.60" x2="54.7" y2="325.60" stroke="#c8c8c8" stroke-width="1.1"/><line x1="786.5" y1="325.60" x2="781.0" y2="325.60" stroke="#c8c8c8" stroke-width="1.1"/><line x1="49.2" y1="303.18" x2="52.2" y2="303.18" stroke="#c8c8c8" stroke-width="1.1"/><line x1="786.5" y1="303.18" x2="783.5" y2="303.18" stroke="#c8c8c8" stroke-width="1.1"/><line x1="49.2" y1="280.75" x2="54.7" y2="280.75" stroke="#c8c8c8" stroke-width="1.1"/><line x1="786.5" y1="280.75" x2="781.0" y2="280.75" stroke="#c8c8c8" stroke-width="1.1"/><line x1="49.2" y1="258.32" x2="52.2" y2="258.32" stroke="#c8c8c8" stroke-width="1.1"/><line x1="786.5" y1="258.32" x2="783.5" y2="258.32" stroke="#c8c8c8" stroke-width="1.1"/><line x1="49.2" y1="235.90" x2="54.7" y2="235.90" stroke="#c8c8c8" stroke-width="1.1"/><line x1="786.5" y1="235.90" x2="781.0" y2="235.90" stroke="#c8c8c8" stroke-width="1.1"/><line x1="49.2" y1="213.47" x2="52.2" y2="213.47" stroke="#c8c8c8" stroke-width="1.1"/><line x1="786.5" y1="213.47" x2="783.5" y2="213.47" stroke="#c8c8c8" stroke-width="1.1"/><line x1="49.2" y1="191.05" x2="54.7" y2="191.05" stroke="#c8c8c8" stroke-width="1.1"/><line x1="786.5" y1="191.05" x2="781.0" y2="191.05" stroke="#c8c8c8" stroke-width="1.1"/><line x1="49.2" y1="168.62" x2="52.2" y2="168.62" stroke="#c8c8c8" stroke-width="1.1"/><line x1="786.5" y1="168.62" x2="783.5" y2="168.62" stroke="#c8c8c8" stroke-width="1.1"/><line x1="49.2" y1="146.20" x2="54.7" y2="146.20" stroke="#c8c8c8" stroke-width="1.1"/><line x1="786.5" y1="146.20" x2="781.0" y2="146.20" stroke="#c8c8c8" stroke-width="1.1"/></svg>
<div class="t" style="left:39.69px;top:140px;font-size:11.7px;line-height:11.7px;color:#dcdcdc;will-change:transform;">1</div>
<div class="t" style="left:29.94px;top:185px;font-size:11.7px;line-height:11.7px;color:#dcdcdc;will-change:transform;">0.5</div>
<div class="t" style="left:39.69px;top:230px;font-size:11.7px;line-height:11.7px;color:#dcdcdc;will-change:transform;">0</div>
<div class="t" style="left:26.04px;top:274px;font-size:11.7px;line-height:11.7px;color:#dcdcdc;will-change:transform;">-0.5</div>
<div class="t" style="left:35.80px;top:319px;font-size:11.7px;line-height:11.7px;color:#dcdcdc;will-change:transform;">-1</div>
<div class="t" style="left:45.95px;top:345px;font-size:11.7px;line-height:11.7px;color:#dcdcdc;will-change:transform;">0</div>
<div class="t" style="left:114.80px;top:345px;font-size:11.7px;line-height:11.7px;color:#dcdcdc;will-change:transform;">0.1</div>
<div class="t" style="left:188.53px;top:345px;font-size:11.7px;line-height:11.7px;color:#dcdcdc;will-change:transform;">0.2</div>
<div class="t" style="left:262.26px;top:345px;font-size:11.7px;line-height:11.7px;color:#dcdcdc;will-change:transform;">0.3</div>
<div class="t" style="left:335.99px;top:345px;font-size:11.7px;line-height:11.7px;color:#dcdcdc;will-change:transform;">0.4</div>
<div class="t" style="left:409.72px;top:345px;font-size:11.7px;line-height:11.7px;color:#dcdcdc;will-change:transform;">0.5</div>
<div class="t" style="left:483.45px;top:345px;font-size:11.7px;line-height:11.7px;color:#dcdcdc;will-change:transform;">0.6</div>
<div class="t" style="left:557.18px;top:345px;font-size:11.7px;line-height:11.7px;color:#dcdcdc;will-change:transform;">0.7</div>
<div class="t" style="left:630.91px;top:345px;font-size:11.7px;line-height:11.7px;color:#dcdcdc;will-change:transform;">0.8</div>
<div class="t" style="left:704.64px;top:345px;font-size:11.7px;line-height:11.7px;color:#dcdcdc;will-change:transform;">0.9</div>
<div class="t" style="left:783.25px;top:345px;font-size:11.7px;line-height:11.7px;color:#dcdcdc;will-change:transform;">1</div>
<div class="t" style="left:386.00px;top:360px;font-size:12.3px;line-height:12.3px;color:#dcdcdc;will-change:transform;">Time (secs)</div>
<div class="t" style="left:11.8px;top:236.4px;font-size:12.9px;line-height:12.9px;color:#dcdcdc;transform:translate(-50%,-50%) rotate(-90deg);will-change:transform;">Amplitude</div>
<div class="r" style="left:332px;top:54px;width:147px;height:254px;box-sizing:border-box;border:1px solid rgba(0,0,0,0.4);background:#f3f3f3;box-shadow:inset 0 0 0 1px #ffffff, 1px 1px 2px rgba(0,0,0,0.3)"></div>
<div class="r" style="left:343px;top:63px;width:14px;height:14px;box-sizing:border-box;border:1px solid #5e5e5e;background:#ffffff"></div>
<svg class="r" style="left:343px;top:63px" width="14" height="14"><polyline points="2.8,7.4 5.6,10.2 11.2,3.4" fill="none" stroke="#111" stroke-width="2"/></svg>
<div class="t" style="left:368.00px;top:65px;font-size:12.5px;line-height:12.5px;color:#444444;transform:scaleX(0.9317);transform-origin:0 0;will-change:auto;">Max</div>
<div class="r" style="left:343px;top:91px;width:14px;height:14px;box-sizing:border-box;border:1px solid #5e5e5e;background:#ffffff"></div>
<svg class="r" style="left:343px;top:91px" width="14" height="14"><polyline points="2.8,7.4 5.6,10.2 11.2,3.4" fill="none" stroke="#111" stroke-width="2"/></svg>
<div class="t" style="left:368.00px;top:93px;font-size:12.5px;line-height:12.5px;color:#444444;transform:scaleX(0.9683);transform-origin:0 0;will-change:auto;">Min</div>
<div class="r" style="left:343px;top:119px;width:14px;height:14px;box-sizing:border-box;border:1px solid #5e5e5e;background:#ffffff"></div>
<svg class="r" style="left:343px;top:119px" width="14" height="14"><polyline points="2.8,7.4 5.6,10.2 11.2,3.4" fill="none" stroke="#111" stroke-width="2"/></svg>
<div class="t" style="left:368.00px;top:121px;font-size:12.5px;line-height:12.5px;color:#444444;transform:scaleX(0.8928);transform-origin:0 0;will-change:auto;">Peak to Peak</div>
<div class="r" style="left:343px;top:147px;width:14px;height:14px;box-sizing:border-box;border:1px solid #5e5e5e;background:#ffffff"></div>
<svg class="r" style="left:343px;top:147px" width="14" height="14"><polyline points="2.8,7.4 5.6,10.2 11.2,3.4" fill="none" stroke="#111" stroke-width="2"/></svg>
<div class="t" style="left:368.00px;top:149px;font-size:12.5px;line-height:12.5px;color:#444444;transform:scaleX(0.9308);transform-origin:0 0;will-change:auto;">Mean</div>
<div class="r" style="left:343px;top:175px;width:14px;height:14px;box-sizing:border-box;border:1px solid #5e5e5e;background:#ffffff"></div>
<div class="t" style="left:368.00px;top:177px;font-size:12.5px;line-height:12.5px;color:#444444;transform:scaleX(0.9089);transform-origin:0 0;will-change:auto;">Variance</div>
<div class="r" style="left:343px;top:203px;width:14px;height:14px;box-sizing:border-box;border:1px solid #5e5e5e;background:#ffffff"></div>
<svg class="r" style="left:343px;top:203px" width="14" height="14"><polyline points="2.8,7.4 5.6,10.2 11.2,3.4" fill="none" stroke="#111" stroke-width="2"/></svg>
<div class="t" style="left:368.00px;top:205px;font-size:12.5px;line-height:12.5px;color:#444444;transform:scaleX(0.9444);transform-origin:0 0;will-change:auto;">Standard Deviation</div>
<div class="r" style="left:343px;top:231px;width:14px;height:14px;box-sizing:border-box;border:1px solid #5e5e5e;background:#ffffff"></div>
<svg class="r" style="left:343px;top:231px" width="14" height="14"><polyline points="2.8,7.4 5.6,10.2 11.2,3.4" fill="none" stroke="#111" stroke-width="2"/></svg>
<div class="t" style="left:368.00px;top:233px;font-size:12.5px;line-height:12.5px;color:#444444;transform:scaleX(0.9610);transform-origin:0 0;will-change:auto;">Median</div>
<div class="r" style="left:343px;top:259px;width:14px;height:14px;box-sizing:border-box;border:1px solid #5e5e5e;background:#ffffff"></div>
<svg class="r" style="left:343px;top:259px" width="14" height="14"><polyline points="2.8,7.4 5.6,10.2 11.2,3.4" fill="none" stroke="#111" stroke-width="2"/></svg>
<div class="t" style="left:368.00px;top:261px;font-size:12.5px;line-height:12.5px;color:#444444;transform:scaleX(0.8497);transform-origin:0 0;will-change:auto;">RMS</div>
<div class="r" style="left:343px;top:287px;width:14px;height:14px;box-sizing:border-box;border:1px solid #5e5e5e;background:#ffffff"></div>
<div class="t" style="left:368.00px;top:289px;font-size:12.5px;line-height:12.5px;color:#444444;transform:scaleX(0.9274);transform-origin:0 0;will-change:auto;">Mean Square</div>
<div class="r" style="left:0px;top:379px;width:800px;height:1px;background:#6a6a6a"></div>
<div class="r" style="left:0px;top:380px;width:800px;height:1px;background:#b0b0b0"></div>
<div class="r" style="left:0px;top:381px;width:800px;height:23px;background:#ffffff"></div>
<div class="t" style="left:26.00px;top:387px;font-size:12.5px;line-height:12.5px;color:#404040;transform:scaleX(1.0297);transform-origin:0 0;">Statistics</div>
<div class="r" style="left:0px;top:403px;width:800px;height:73px;background:#121212"></div>
<div class="r" style="left:0px;top:403px;width:800px;height:1px;background:#6e6e6e"></div>
<div class="r" style="left:0px;top:431px;width:800px;height:1px;background:#6e6e6e"></div>
<div class="r" style="left:0px;top:453px;width:800px;height:1px;background:#6e6e6e"></div>
<div class="r" style="left:0px;top:475px;width:800px;height:1px;background:#6e6e6e"></div>
<div class="r" style="left:0px;top:476px;width:800px;height:1px;background:#1e1e1e"></div>
<div class="r" style="left:0px;top:477px;width:800px;height:1px;background:#888888"></div>
<div class="r" style="left:0px;top:403px;width:1px;height:73px;background:#6e6e6e"></div>
<div class="r" style="left:100px;top:403px;width:1px;height:73px;background:#6e6e6e"></div>
<div class="r" style="left:200px;top:403px;width:1px;height:73px;background:#6e6e6e"></div>
<div class="r" style="left:300px;top:403px;width:1px;height:73px;background:#6e6e6e"></div>
<div class="r" style="left:400px;top:403px;width:1px;height:73px;background:#6e6e6e"></div>
<div class="r" style="left:500px;top:403px;width:1px;height:73px;background:#6e6e6e"></div>
<div class="r" style="left:600px;top:403px;width:1px;height:73px;background:#6e6e6e"></div>
<div class="r" style="left:700px;top:403px;width:1px;height:73px;background:#6e6e6e"></div>
<div class="t" style="left:4.40px;top:413px;font-size:12px;line-height:12px;color:#f0f0f0;font-weight:bold;transform:scaleX(0.9451);transform-origin:0 0;">Channel 1</div>
<div class="t" style="left:4.40px;top:436px;font-size:12px;line-height:12px;color:#e6e6e6;transform:scaleX(0.8740);transform-origin:0 0;">Time (ms)</div>
<div class="t" style="left:4.40px;top:458px;font-size:12px;line-height:12px;color:#e6e6e6;transform:scaleX(0.8740);transform-origin:0 0;">Value</div>
<div class="t" style="left:104.40px;top:413px;font-size:12px;line-height:12px;color:#f0f0f0;font-weight:bold;">Max</div>
<div class="t" style="left:104.40px;top:436px;font-size:12px;line-height:12px;color:#e6e6e6;transform:scaleX(0.8740);transform-origin:0 0;">953.0000</div>
<div class="t" style="left:104.40px;top:458px;font-size:12px;line-height:12px;color:#e6e6e6;transform:scaleX(0.8740);transform-origin:0 0;">0.9511</div>
<div class="t" style="left:204.40px;top:413px;font-size:12px;line-height:12px;color:#f0f0f0;font-weight:bold;transform:scaleX(1.0356);transform-origin:0 0;">Min</div>
<div class="t" style="left:204.40px;top:436px;font-size:12px;line-height:12px;color:#e6e6e6;transform:scaleX(0.8740);transform-origin:0 0;">937.0000</div>
<div class="t" style="left:204.40px;top:458px;font-size:12px;line-height:12px;color:#e6e6e6;transform:scaleX(0.8740);transform-origin:0 0;">-0.9511</div>
<div class="t" style="left:304.40px;top:413px;font-size:12px;line-height:12px;color:#f0f0f0;font-weight:bold;transform:scaleX(0.9640);transform-origin:0 0;">Peak to Peak</div>
<div class="t" style="left:304.40px;top:458px;font-size:12px;line-height:12px;color:#e6e6e6;transform:scaleX(0.8740);transform-origin:0 0;">1.9021</div>
<div class="t" style="left:404.40px;top:413px;font-size:12px;line-height:12px;color:#f0f0f0;font-weight:bold;transform:scaleX(1.0172);transform-origin:0 0;">Mean</div>
<div class="t" style="left:404.40px;top:458px;font-size:12px;line-height:12px;color:#e6e6e6;transform:scaleX(0.8740);transform-origin:0 0;">0.0006</div>
<div class="t" style="left:504.40px;top:413px;font-size:12px;line-height:12px;color:#f0f0f0;font-weight:bold;transform:scaleX(0.9865);transform-origin:0 0;">Standard De...</div>
<div class="t" style="left:504.40px;top:458px;font-size:12px;line-height:12px;color:#e6e6e6;transform:scaleX(0.8740);transform-origin:0 0;">0.7076</div>
<div class="t" style="left:604.40px;top:413px;font-size:12px;line-height:12px;color:#f0f0f0;font-weight:bold;">Median</div>
<div class="t" style="left:604.40px;top:458px;font-size:12px;line-height:12px;color:#e6e6e6;transform:scaleX(0.8740);transform-origin:0 0;">0.0000</div>
<div class="t" style="left:704.40px;top:413px;font-size:12px;line-height:12px;color:#f0f0f0;font-weight:bold;transform:scaleX(0.9601);transform-origin:0 0;">RMS</div>
<div class="t" style="left:704.40px;top:458px;font-size:12px;line-height:12px;color:#e6e6e6;transform:scaleX(0.8740);transform-origin:0 0;">0.7072</div>
<div class="r" style="left:0px;top:478px;width:800px;height:1px;background:#8e8e8e"></div>
<div class="r" style="left:0px;top:479px;width:800px;height:1px;background:#f0f0f0"></div>
<div class="r" style="left:0px;top:480px;width:800px;height:20px;background:#e6e6e6"></div>
<div class="t" style="left:7.30px;top:485px;font-size:12.5px;line-height:12.5px;color:#404040;transform:scaleX(0.9318);transform-origin:0 0;">Stopped</div>
<div class="t" style="left:664.80px;top:485px;font-size:12.5px;line-height:12.5px;color:#404040;transform:scaleX(0.9528);transform-origin:0 0;">Frames=1&nbsp;&nbsp;T=0.9990</div>
<svg class="r" style="left:782px;top:484px" width="16" height="14"><polygon points="3,1.8 14.2,1.8 8.6,8.1" fill="#8c8c8c"/><rect x="3" y="8.8" width="11.7" height="1.9" fill="#8c8c8c"/></svg>
<svg class="r" style="left:0px;top:494px" width="6" height="6"><polygon points="0,1 5,6 0,6" fill="#1a1a1a"/></svg>
<svg class="r" style="left:796px;top:496px" width="4" height="4"><polygon points="4,0 4,4 0,4" fill="#a89848"/></svg>
</body></html>
